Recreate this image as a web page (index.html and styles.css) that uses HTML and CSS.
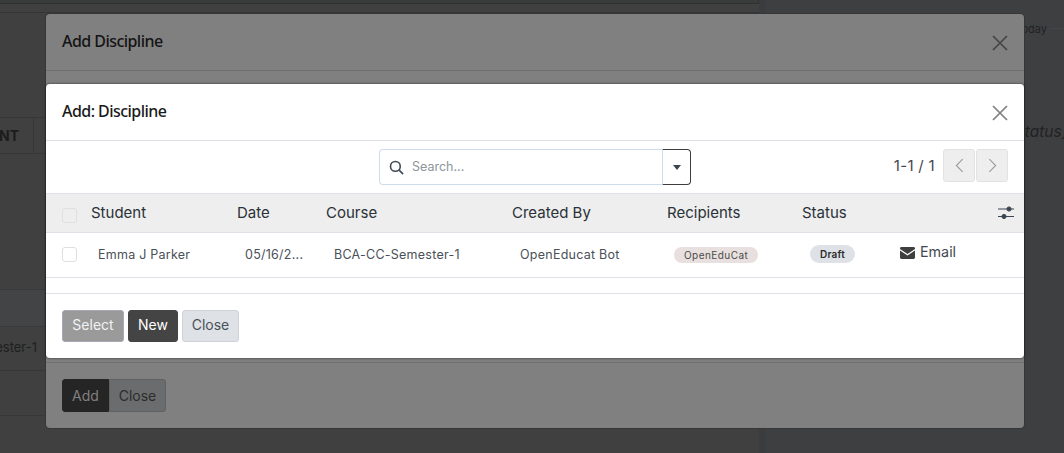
FILE: index.html
```html
<!DOCTYPE html>
<html lang="en">
<head>
<meta charset="utf-8">
<title>Add: Discipline</title>
<link rel="stylesheet" href="styles.css">
</head>
<body>
<div class="backdrop">
  <div class="bg-main"></div>
  <div class="bg-topbar"></div>
  <div class="bg-strip"></div>
  <span class="bg-text bg-today">Today</span>
  <div class="bg-today-line"></div>
  <span class="bg-text bg-status">{status}</span>
  <div class="bg-head"><span class="bg-ent">MENT</span></div>
  <div class="bg-row-band"></div>
  <div class="bg-row"><span>Semester-1</span></div>
  <div class="bg-row bg-row-empty"></div>
  <div class="bg-side"></div>
</div>

<section class="modal modal-under">
  <header class="under-head">
    <h4 class="under-title">Add Discipline</h4>
    <svg class="x-icon" viewBox="0 0 16 16"><path d="M1 1 15 15M15 1 1 15"/></svg>
  </header>
  <footer class="under-foot">
    <button class="btn btn-add">Add</button><button class="btn btn-under-close">Close</button>
  </footer>
</section>

<section class="modal modal-top">
  <header class="top-head">
    <h4 class="top-title">Add: Discipline</h4>
    <svg class="x-icon x-light" viewBox="0 0 16 16"><path d="M1 1 15 15M15 1 1 15"/></svg>
  </header>
  <div class="toolbar">
    <div class="search">
      <div class="search-box">
        <svg class="search-icon" viewBox="0 0 16 16"><circle cx="6.8" cy="6.8" r="5.2"/><path d="M10.6 10.6 15 15"/></svg>
        <span class="search-ph">Search...</span>
      </div>
      <div class="search-drop"><span class="caret"></span></div>
    </div>
    <div class="pager">
      <span class="pager-count">1-1 / 1</span>
      <div class="pager-btns">
        <button class="page-btn"><svg viewBox="0 0 10 16"><path d="M8.5 1 1.5 8l7 7"/></svg></button>
        <button class="page-btn"><svg viewBox="0 0 10 16"><path d="M1.5 1l7 7-7 7"/></svg></button>
      </div>
    </div>
  </div>
  <div class="thead">
    <span class="check check-head"></span>
    <span class="th c-student">Student</span>
    <span class="th c-date">Date</span>
    <span class="th c-course">Course</span>
    <span class="th c-by">Created By</span>
    <span class="th c-rec">Recipients</span>
    <span class="th c-status">Status</span>
    <svg class="sliders" viewBox="0 0 16 14"><path d="M0 4H16M0 11.500H16"/><circle cx="11" cy="4" r="2.100"/><circle cx="6" cy="11.500" r="2.100"/></svg>
  </div>
  <div class="trow">
    <span class="check check-row"></span>
    <span class="td c-student">Emma J Parker</span>
    <span class="td c-date">05/16/2...</span>
    <span class="td c-course">BCA-CC-Semester-1</span>
    <span class="td c-by">OpenEducat Bot</span>
    <span class="td c-rec"><span class="pill pill-rec">OpenEduCat</span></span>
    <span class="td c-status"><span class="pill pill-draft">Draft</span></span>
    <span class="email">
      <svg class="mail" viewBox="0 0 15 12"><path d="M1.4 0h12.2A1.4 1.4 0 0 1 15 1.4v.5L7.5 7 0 1.900v-.5A1.400 1.400 0 0 1 1.400 0zM0 3.600l7.500 5 7.500-5v7A1.400 1.400 0 0 1 13.600 12H1.400A1.400 1.400 0 0 1 0 10.600z"/></svg>
      Email
    </span>
  </div>
  <div class="spacer"></div>
  <footer class="top-foot">
    <button class="btn btn-select">Select</button>
    <button class="btn btn-new">New</button>
    <button class="btn btn-close">Close</button>
  </footer>
</section>
</body>
</html>
```
FILE: styles.css
```css
* { box-sizing: border-box; }
html, body { margin: 0; height: 100%; }
body {
  width: 1064px;
  height: 453px;
  overflow: hidden;
  position: relative;
  background: #3e3f41;
  font-family: "Inter", "Roboto", sans-serif;
  color: #212529;
}

/* dimmed page behind the dialogs */
.backdrop { position: absolute; inset: 0; overflow: hidden; background: #3e3f41; }
.bg-main { position: absolute; left: 0; top: 0; width: 759px; height: 453px; background: #404040; }
.bg-topbar { position: absolute; left: 0; top: 0; width: 759px; height: 4px; background: #3a3b3b; border-bottom: 1px solid #303030; border-right: 1px solid #303030; }
.bg-strip { position: absolute; left: 0; top: 12px; width: 759px; height: 1px; background: #353636; }
.bg-side { position: absolute; left: 759px; top: 0; width: 7px; height: 453px; background: #3b3c3d; }
.bg-text { position: absolute; font-size: 11px; color: #222; }
.bg-today { left: 1000px; top: 22px; width: 47px; text-align: right; }
.bg-today-line { position: absolute; left: 1050px; top: 28px; width: 14px; height: 1px; background: #444547; }
.bg-status { left: 1010px; top: 122px; width: 52px; font-size: 15.500px; font-style: italic; text-align: right; white-space: nowrap; }
.bg-head { position: absolute; left: 0; top: 117px; width: 759px; height: 37px; border-top: 1px solid #363738; border-bottom: 1px solid #363738; }
.bg-ent { position: absolute; right: 740px; top: 9px; font-size: 14px; font-weight: 700; color: #1c1c1c; }
.bg-head::after { content: ""; position: absolute; left: 33px; top: 0; width: 1px; height: 35px; background: #363738; }
.bg-row-band { position: absolute; left: 0; top: 289px; width: 759px; height: 37px; background: #434445; border-top: 1px solid #393a3b; }
.bg-row { position: absolute; left: 0; top: 326px; width: 759px; height: 45px; border-bottom: 1px solid #363738; border-top: 1px solid #393a3b; font-size: 13px; color: #1f1f1f; }
.bg-row-empty { top: 371px; border-top: 0; }
.bg-row span { position: absolute; right: 722px; top: 12px; white-space: nowrap; }

/* dialogs */
.modal { position: absolute; left: 46px; width: 978px; border-radius: 4px; }
.modal-under { top: 14px; height: 414px; background: #808080; display: flex; flex-direction: column; justify-content: space-between; box-shadow: 0 0 0 1px #363636; }
.modal-top { top: 84px; height: 274px; background: #fff; display: flex; flex-direction: column; box-shadow: 0 0 2px 1px rgba(0,0,0,.3); }

.under-head { height: 57px; border-bottom: 1px solid #6f6f6f; display: flex; align-items: center; justify-content: space-between; padding: 0 16px; }
.under-title, .top-title { margin: 0 0 2px; font-family: "Noto Sans", sans-serif; font-size: 16px; letter-spacing: -.55px; font-weight: 500; color: #1a1a1a; }
.under-title { color: #141414; }
.x-icon { width: 16px; height: 16px; fill: none; stroke: #454545; stroke-width: 1.700; margin-top: 1px; }
.x-light { stroke: #808080; }
.under-foot { height: 66px; border-top: 1px solid #6f6f6f; padding: 16px 16px 0; display: flex; align-items: flex-start; }

.top-head { height: 57px; border-bottom: 1px solid #dee2e6; display: flex; align-items: center; justify-content: space-between; padding: 0 16px; flex: none; }
.toolbar { height: 53px; flex: none; position: relative; display: flex; justify-content: flex-end; align-items: flex-start; padding: 8px 16px 0; border-bottom: 1px solid #dee2e6; }
.search { position: absolute; left: 333px; top: 8px; width: 312px; height: 36px; display: flex; }
.search-box { flex: 1; border: 1px solid #cfdcec; border-right: 0; border-radius: 4px 0 0 4px; display: flex; align-items: center; padding-left: 9px; gap: 8px; }
.search-icon { width: 15px; height: 15px; fill: none; stroke: #3f4a56; stroke-width: 1.700; }
.search-ph { font-size: 12.500px; color: #8d949b; margin-bottom: 1px; }
.search-drop { width: 29px; border: 1px solid #3d3d3d; border-left-color: #cfdcec; border-radius: 0 4px 4px 0; display: flex; align-items: center; justify-content: center; }
.caret { width: 0; height: 0; border: 4.500px solid transparent; border-top: 5px solid #3d4650; border-bottom: 0; }
.pager { display: flex; align-items: flex-start; gap: 8px; }
.pager-count { font-size: 15px; letter-spacing: .3px; color: #3f4650; line-height: 33px; }
.pager-btns { display: flex; gap: 1px; }
.page-btn { width: 32px; height: 33px; padding: 0; background: #eeeeee; border: 1px solid #e2e2e2; border-radius: 3px; display: flex; align-items: center; justify-content: center; }
.page-btn svg { width: 9px; height: 15px; fill: none; stroke: #9a9a9a; stroke-width: 1.200; }

.thead { height: 39px; flex: none; background: #eeeeee; border-bottom: 1px solid #dee2e6; display: flex; align-items: center; position: relative; padding-bottom: 1px; }
.trow { height: 45px; flex: none; border-bottom: 1px solid #dee2e6; display: flex; align-items: center; position: relative; }
.check { position: absolute; left: 16px; width: 15px; height: 15px; border: 1px solid #dcdfe3; border-radius: 3px; background: #fff; }
.check-head { background: #eeeeee; top: 14px; }
.check-row { top: 14px; }
.th, .td { white-space: nowrap; position: absolute; }
.th { font-size: 15px; color: #2a3138; top: 9px; }
.td { font-size: 12.500px; letter-spacing: .25px; color: #4a5057; top: 14px; }
.th.c-student { left: 45px; } .td.c-student { left: 52px; }
.th.c-date { left: 191px; } .td.c-date { left: 199px; }
.th.c-course { left: 280px; } .td.c-course { left: 288px; }
.th.c-by { left: 466px; } .td.c-by { left: 474px; }
.th.c-rec { left: 621px; } .td.c-rec { left: 628px; top: 14px; }
.th.c-status { left: 756px; } .td.c-status { left: 764px; top: 12px; }
.pill { display: inline-block; border-radius: 9px; font-size: 10px; line-height: 16px; padding: 0 10px; white-space: nowrap; }
.pill-rec { background: #e8e0de; color: #4a4a4a; letter-spacing: .45px; }
.pill-draft { background: #dee2e6; color: #2b2b2b; font-weight: 600; line-height: 18px; padding: 0 10px; letter-spacing: .2px; }
.email { position: absolute; left: 854px; top: 10px; display: flex; align-items: center; gap: 5px; font-size: 14.300px; color: #43494f; }
.mail { width: 15px; height: 12px; fill: #3f3f3f; margin-top: 2px; }
.sliders { position: absolute; right: 10px; top: 11px; width: 16px; height: 14px; stroke: #3b4652; stroke-width: 1; fill: #3b4652; }
.spacer { height: 16px; flex: none; border-bottom: 1px solid #dee2e6; }
.top-foot { padding: 16px 16px 0; display: flex; gap: 4px; flex: none; }

.btn { height: 32px; border: 1px solid transparent; border-radius: 3px; padding: 0 0 3px; font: 14px "Inter", "Roboto", sans-serif; }
.btn-select { width: 62px; background: #9a9a9a; color: #f2f2f2; border-color: #a9a6b5; }
.btn-new { width: 50px; background: #444444; color: #fff; border-color: #444; }
.btn-close { width: 57px; background: #dee2e6; color: #495057; border-color: #ced2d6; }
.btn-add { background: #252525; color: #808080; border-radius: 3px 0 0 3px; height: 33px; border-color: #252525; width: 47px; padding: 0; }
.btn-under-close { background: #6a6c6e; color: #2c2c2c; border-color: #5f6163; border-radius: 0 3px 3px 0; height: 33px; width: 57px; padding: 0; }
```
